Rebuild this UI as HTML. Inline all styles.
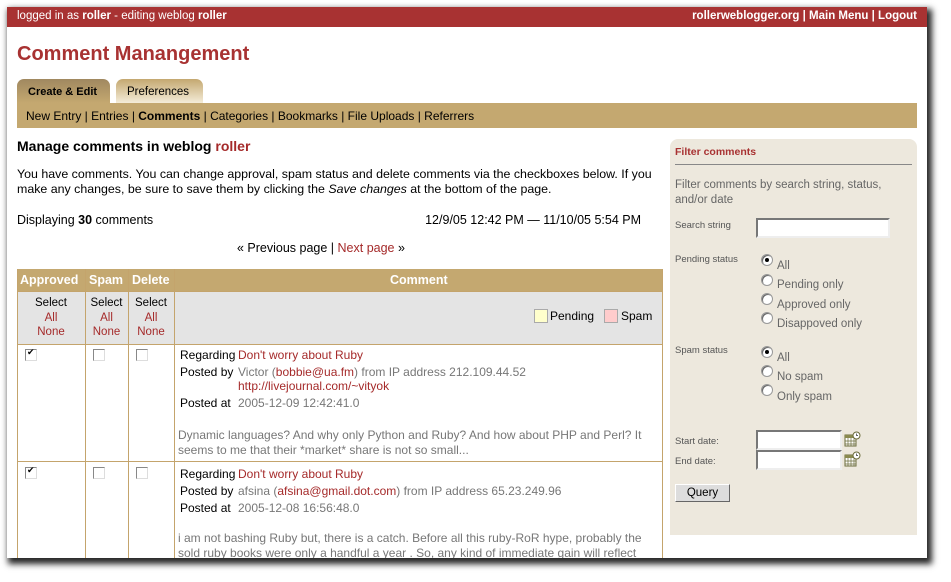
<!DOCTYPE html>
<html><head><style>
body{margin:0;width:951px;height:582px;background:#fff;position:relative;overflow:hidden;font-family:"Liberation Sans",Arial,sans-serif;font-size:11px;color:#000}
.win{position:absolute;left:7px;top:7px;width:920px;height:551px;background:#fff;box-shadow:3px 4px 6px 2px rgba(0,0,0,.85);overflow:hidden}
.a{position:absolute;white-space:nowrap}
.red{color:#a52a2a}
.g{color:#777}
.top{position:absolute;left:0;top:0;width:920px;height:20px;background:#a83232;color:#fff}
.cb{position:absolute;width:10px;height:10px;border:1px solid #888;border-right-color:#ddd;border-bottom-color:#ddd;background:#fff}
.rd{position:absolute;width:10px;height:10px;border-radius:50%;border:1px solid #999;background:#fff;box-shadow:inset 1px 1px 0 #666}
.inp{position:absolute;background:#fff;border:2px solid #777;border-right-color:#eee;border-bottom-color:#eee}
.vl{position:absolute;width:1px;background:#c4a46c}
.hl{position:absolute;height:1px;background:#c4a46c}
</style></head><body>
<div class="win">
<div class="top">
<span class="a" style="left:10px;top:3px;font-size:11.5px">logged in as <b>roller</b> - editing weblog <b>roller</b></span>
<span class="a" style="right:10px;top:3px;font-weight:bold;font-size:11.5px">rollerweblogger.org | Main Menu | Logout</span>
</div>
<div class="a red" style="left:10px;top:36px;font-size:20px;font-weight:bold;color:#a83232">Comment Manangement</div>
<div class="a" style="left:10px;top:72px;width:93px;height:24px;border-radius:7px 7px 0 0;background:linear-gradient(#a08860,#c4a870)"></div>
<div class="a" style="left:21px;top:79px;font-weight:bold">Create &amp; Edit</div>
<div class="a" style="left:109px;top:72px;width:87px;height:24px;border-radius:7px 7px 0 0;background:linear-gradient(#c4a870,#f4ecd8)"></div>
<div class="a" style="left:120px;top:79px;font-size:11.5px">Preferences</div>
<div class="a" style="left:10px;top:96px;width:900px;height:25px;background:#c4a870"></div>
<div class="a" style="left:19px;top:102px;font-size:12px">New Entry | Entries | <b>Comments</b> | Categories | Bookmarks | File Uploads | Referrers</div>

<div class="a" style="left:10px;top:131px;font-size:14px;font-weight:bold">Manage comments in weblog <span class="red">roller</span></div>
<div class="a" style="left:10px;top:160px;line-height:15px;font-size:12.4px">You have comments. You can change approval, spam status and delete comments via the checkboxes below. If you<br>make any changes, be sure to save them by clicking the <i>Save changes</i> at the bottom of the page.</div>
<div class="a" style="left:10px;top:206px;font-size:12.5px">Displaying <b>30</b> comments</div>
<div class="a" style="right:286px;top:206px;font-size:12.5px">12/9/05 12:42 PM — 11/10/05 5:54 PM</div>
<div class="a" style="left:230px;top:234px;font-size:12.5px">« Previous page | <span class="red">Next page</span> »</div>

<!-- table -->
<div class="a" style="left:10px;top:262px;width:645px;height:22px;background:#c4a870"></div>
<div class="a" style="left:10px;top:284px;width:645px;height:53px;background:#e4e4e4"></div>
<div class="a" style="left:13px;top:266px;color:#fff;font-weight:bold;font-size:12.5px">Approved</div>
<div class="a" style="left:82px;top:266px;color:#fff;font-weight:bold;font-size:12.5px">Spam</div>
<div class="a" style="left:125px;top:266px;color:#fff;font-weight:bold;font-size:12.5px">Delete</div>
<div class="a" style="left:383px;top:266px;color:#fff;font-weight:bold;font-size:12.5px">Comment</div>
<div class="a" style="left:10px;top:289px;width:68px;text-align:center;line-height:14.5px;font-size:11.5px">Select<br><span class="red">All</span><br><span class="red">None</span></div>
<div class="a" style="left:78px;top:289px;width:43px;text-align:center;line-height:14.5px;font-size:11.5px">Select<br><span class="red">All</span><br><span class="red">None</span></div>
<div class="a" style="left:121px;top:289px;width:46px;text-align:center;line-height:14.5px;font-size:11.5px">Select<br><span class="red">All</span><br><span class="red">None</span></div>
<div class="a" style="left:527px;top:302px;width:12px;height:12px;background:#ffffcc;border:1px solid #aaa"></div>
<div class="a" style="left:543px;top:302px;font-size:12px">Pending</div>
<div class="a" style="left:597px;top:302px;width:12px;height:12px;background:#fcc;border:1px solid #aaa"></div>
<div class="a" style="left:614px;top:302px;font-size:12px">Spam</div>

<div class="vl" style="left:10px;top:262px;height:300px"></div>
<div class="vl" style="left:78px;top:262px;height:300px"></div>
<div class="vl" style="left:121px;top:262px;height:300px"></div>
<div class="vl" style="left:167px;top:262px;height:300px"></div>
<div class="vl" style="left:655px;top:262px;height:300px"></div>
<div class="hl" style="left:10px;top:284px;width:646px"></div>
<div class="hl" style="left:10px;top:337px;width:646px"></div>
<div class="hl" style="left:10px;top:454px;width:646px"></div>

<div class="cb" style="left:18px;top:342px"><span style="position:absolute;left:1px;top:-3px;font-size:9px">✔</span></div>
<div class="cb" style="left:86px;top:342px"></div>
<div class="cb" style="left:129px;top:342px"></div>
<div class="a" style="left:173px;top:341px;font-size:12px">Regarding</div>
<div class="a" style="left:173px;top:358px;font-size:12px">Posted by</div>
<div class="a" style="left:231px;top:341px;font-size:12px"><span class="red">Don't worry about Ruby</span></div>
<div class="a g" style="left:231px;top:358px;font-size:12px;line-height:14px">Victor (<span class="red">bobbie@ua.fm</span>) from IP address 212.109.44.52<br><span class="red">http://livejournal.com/~vityok</span></div>
<div class="a" style="left:173px;top:389px;font-size:12px">Posted at</div>
<div class="a g" style="left:231px;top:389px;font-size:12px">2005-12-09 12:42:41.0</div>
<div class="a g" style="left:171px;top:421px;font-size:12px;line-height:15px">Dynamic languages? And why only Python and Ruby? And how about PHP and Perl? It<br>seems to me that their *market* share is not so small...</div>

<div class="cb" style="left:18px;top:460px"><span style="position:absolute;left:1px;top:-3px;font-size:9px">✔</span></div>
<div class="cb" style="left:86px;top:460px"></div>
<div class="cb" style="left:129px;top:460px"></div>
<div class="a" style="left:173px;top:459px;font-size:12px;line-height:17px">Regarding<br>Posted by<br>Posted at</div>
<div class="a" style="left:231px;top:459px;font-size:12px;line-height:17px"><span class="red">Don't worry about Ruby</span><br><span class="g">afsina (<span class="red">afsina@gmail.dot.com</span>) from IP address 65.23.249.96</span><br><span class="g">2005-12-08 16:56:48.0</span></div>
<div class="a g" style="left:171px;top:524px;font-size:12px;line-height:15px">i am not bashing Ruby but, there is a catch. Before all this ruby-RoR hype, probably the<br>sold ruby books were only a handful a year . So, any kind of immediate gain will reflect</div>

<!-- sidebar -->
<div class="a" style="left:663px;top:132px;width:247px;height:396px;background:#ede8dd;border-radius:8px 8px 0 0"></div>
<div class="a" style="left:668px;top:139px;font-weight:bold;font-size:10.5px;color:#a83232">Filter comments</div>
<div class="a" style="left:668px;top:157px;width:237px;height:1px;background:#888"></div>
<div class="a g" style="left:668px;top:171px;font-size:11.5px;line-height:15px;color:#666">Filter comments by search string, status,<br>and/or date</div>
<div class="a g" style="left:668px;top:213px;font-size:9.5px;color:#555">Search string</div>
<div class="inp" style="left:749px;top:211px;width:130px;height:16px"></div>
<div class="a g" style="left:668px;top:247px;font-size:9.5px;color:#555">Pending status</div>
<div class="rd" style="left:754px;top:247px"><span style="position:absolute;left:3px;top:3px;width:4px;height:4px;border-radius:50%;background:#000"></span></div>
<div class="a g" style="left:770px;top:250px;font-size:11.5px;line-height:19.3px;color:#666">All<br>Pending only<br>Approved only<br>Disappoved only</div>
<div class="rd" style="left:754px;top:267px"></div>
<div class="rd" style="left:754px;top:286px"></div>
<div class="rd" style="left:754px;top:305px"></div>
<div class="a g" style="left:668px;top:338px;font-size:9.5px;color:#555">Spam status</div>
<div class="rd" style="left:754px;top:339px"><span style="position:absolute;left:3px;top:3px;width:4px;height:4px;border-radius:50%;background:#000"></span></div>
<div class="a g" style="left:770px;top:342px;font-size:11.5px;line-height:19.3px;color:#666">All<br>No spam<br>Only spam</div>
<div class="rd" style="left:754px;top:358px"></div>
<div class="rd" style="left:754px;top:377px"></div>
<div class="a g" style="left:668px;top:425px;font-size:9.5px;color:#555;line-height:20px">Start date:<br>End date:</div>
<div class="inp" style="left:749px;top:423px;width:82px;height:16px"></div>
<div class="inp" style="left:749px;top:443px;width:82px;height:16px"></div>
<svg class="a" style="left:837px;top:424px" width="17" height="17" viewBox="0 0 17 17"><rect x="1" y="4" width="11" height="11" fill="#fff" stroke="#6b6b3a"/><rect x="1" y="4" width="11" height="3" fill="#8a8a50"/><path d="M4 7v8M7 7v8M10 7v8M1 10h11M1 13h11" stroke="#6b6b3a" stroke-width=".7"/><circle cx="12.5" cy="4.5" r="3.5" fill="#fff" stroke="#6b6b3a"/><path d="M12.5 2.5v2h1.5" stroke="#333" stroke-width=".7" fill="none"/></svg>
<svg class="a" style="left:837px;top:444px" width="17" height="17" viewBox="0 0 17 17"><rect x="1" y="4" width="11" height="11" fill="#fff" stroke="#6b6b3a"/><rect x="1" y="4" width="11" height="3" fill="#8a8a50"/><path d="M4 7v8M7 7v8M10 7v8M1 10h11M1 13h11" stroke="#6b6b3a" stroke-width=".7"/><circle cx="12.5" cy="4.5" r="3.5" fill="#fff" stroke="#6b6b3a"/><path d="M12.5 2.5v2h1.5" stroke="#333" stroke-width=".7" fill="none"/></svg>
<div class="a" style="left:668px;top:477px;width:53px;height:16px;background:#ddd;border:1px solid #fff;border-right-color:#666;border-bottom-color:#666;text-align:center;line-height:16px;font-size:11.5px">Query</div>
</div>
</body></html>
